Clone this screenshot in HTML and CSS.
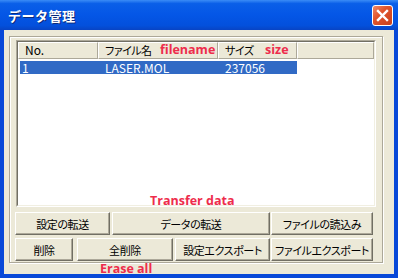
FILE: index.html
```html
<!DOCTYPE html>
<html lang="ja">
<head>
  <meta charset="UTF-8" />
  <title>データ管理</title>
  <link rel="stylesheet" href="styles.css">
</head>
<body>
  <div class="window">
    <div class="titlebar">
      <div class="title">データ管理</div>
      <div class="close-btn">
        <svg width="13" height="13" viewBox="0 0 13 13">
          <path d="M2 2 L11 11 M11 2 L2 11" stroke="#fff" stroke-width="2.4" stroke-linecap="square"/>
        </svg>
      </div>
    </div>

    <div class="client">
      <div class="frame">
        <div class="list">
          <div class="list-inner">
            <div class="header">
              <div class="hcell col-no">No.</div>
              <div class="hcell col-name jp">ファイル名</div>
              <div class="hcell col-size jp">サイズ</div>
              <div class="hcell col-fill"></div>
            </div>
            <div class="row selected">
              <div class="cell col-no">1</div>
              <div class="cell col-name">LASER.MOL</div>
              <div class="cell col-size">237056</div>
            </div>
          </div>
        </div>

        <div class="btn-row">
          <button class="btn w-95">設定の転送</button>
          <button class="btn w-158">データの転送</button>
          <button class="btn w-102 gap-1">ファイルの読込み</button>
        </div>
        <div class="btn-row second">
          <button class="btn w-58">削除</button>
          <button class="btn w-96 gap-4">全削除</button>
          <button class="btn w-95">設定エクスポート</button>
          <button class="btn w-102 gap-1">ファイルエクスポート</button>
        </div>
      </div>
    </div>

    <!-- annotations -->
    <div class="note note-filename">filename</div>
    <div class="note note-size">size</div>
    <div class="note note-transfer">Transfer data</div>
    <div class="note note-erase">Erase all</div>
  </div>
</body>
</html>
```

FILE: styles.css
```css
html, body {
  margin: 0;
  padding: 0;
  background: #ffffff;
}

.window {
  position: relative;
  width: 398px;
  height: 278px;
  display: flex;
  flex-direction: column;
  background: #0848d8;
  font-family: "Noto Sans CJK JP", sans-serif;
  font-size: 12px;
  color: #000;
}

.jp {
  font-size: 11px;
  font-feature-settings: "palt";
  letter-spacing: -0.5px;
}

.titlebar {
  height: 30px;
  display: flex;
  align-items: center;
  justify-content: space-between;
  padding: 0 5px 0 8px;
  background: linear-gradient(to bottom, #3a8cf6 0%, #0a5fe8 12%, #0456e6 50%, #0350dc 85%, #0844c4 100%);
}
.title {
  color: #fff;
  font-weight: bold;
  font-size: 13px;
  letter-spacing: 0.5px;
  text-shadow: 1px 1px 0 #0a2a7a;
}
.close-btn {
  width: 19px;
  height: 19px;
  margin-top: 1px;
  border: 1px solid #fff;
  border-radius: 3px;
  background: linear-gradient(135deg, #f08a68 0%, #e0542c 40%, #c8401c 100%);
  display: flex;
  align-items: center;
  justify-content: center;
}

.client {
  flex: 1;
  margin: 0 4px 4px 4px;
  background: #ece9d8;
  padding: 6px 10px 0 5px;
}

.frame {
  box-sizing: border-box;
  width: 374px;
  height: 227px;
  border: 1px solid #aca899;
  box-shadow: 1px 1px 0 #fff, inset 1px 1px 0 #fff;
  padding: 3px 0 0 5px;
}

.list {
  box-sizing: border-box;
  width: 360px;
  height: 167px;
  margin-left: 1px;
  border: 1px solid;
  border-color: #aca899 #fff #fff #aca899;
}
.list-inner {
  box-sizing: border-box;
  height: 100%;
  border: 1px solid;
  border-color: #716f64 #f1efe2 #f1efe2 #716f64;
  background: #fff;
  overflow: hidden;
}

.header {
  display: flex;
  height: 17px;
}
.hcell {
  box-sizing: border-box;
  height: 17px;
  line-height: 14px;
  padding-left: 6px;
  background: #ece9d8;
  border-top: 1px solid #fff;
  border-left: 1px solid #fff;
  border-right: 1px solid #aca899;
  border-bottom: 1px solid #aca899;
  white-space: nowrap;
}
.col-no { width: 80px; }
.col-name { width: 120px; }
.col-size { width: 79px; }
.col-fill { flex: 1; }

.row {
  display: flex;
  height: 13px;
  line-height: 13px;
  margin: 2px 0 0 2px;
  width: 277px;
}
.row.selected {
  background: #316ac5;
  color: #fff;
}
.cell {
  box-sizing: border-box;
  white-space: nowrap;
  padding-left: 6px;
}
.row .col-no { width: 78px; padding-left: 2px; }
.row .col-name { width: 120px; padding-left: 7px; }
.row .col-size { padding-left: 7px; }

.btn-row {
  display: flex;
  margin-top: 5px;
}
.btn-row.second {
  margin-top: 3px;
}
.btn {
  box-sizing: border-box;
  flex: none;
  min-width: 0;
  height: 23px;
  margin: 0 2px 0 0;
  padding: 0;
  overflow: hidden;
  font-family: "Noto Sans CJK JP", sans-serif;
  font-size: 11px;
  font-feature-settings: "palt";
  letter-spacing: -0.4px;
  color: #000;
  background: #ece9d8;
  border: 1px solid;
  border-color: #fff #716f64 #716f64 #fff;
  box-shadow: inset -1px -1px 0 #aca899;
  white-space: nowrap;
}
.gap-1 { margin-left: -1px; }
.gap-4 { margin-left: 2px; }
.w-58 { width: 58px; }
.w-95 { width: 95px; }
.w-96 { width: 96px; }
.w-102 { width: 102px; }
.w-158 { width: 158px; }

.note {
  position: absolute;
  font-family: "Open Sans", sans-serif;
  font-weight: bold;
  font-size: 12.5px;
  color: #ee2c4c;
  line-height: 14px;
  white-space: nowrap;
}
.note-filename { left: 160px; top: 43px; }
.note-size { left: 265px; top: 43px; }
.note-transfer { left: 150px; top: 194px; }
.note-erase { left: 100px; top: 262px; }
```
